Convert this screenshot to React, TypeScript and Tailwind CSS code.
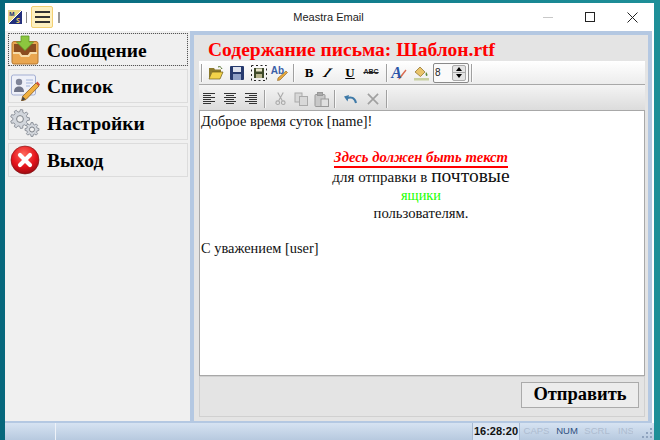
import type { ReactNode } from "react";

const serif = "font-['Liberation_Serif',serif]";
const sans = "font-['Liberation_Sans',sans-serif]";

function Sep({ className = "mx-[2px]" }: { className?: string }) {
  return <div className={`h-[18px] w-[2px] border-l border-[#a0a0a0] bg-white/70 shrink-0 ${className}`} />;
}

function Tool({ children, w }: { children: ReactNode; w: string }) {
  return <div className={`${w} h-[20px] flex items-center justify-center shrink-0`}>{children}</div>;
}

function MailIcon() {
  return (
    <svg width="30" height="30" viewBox="0 0 30 30">
      <path d="M2 8.500a2 2 0 0 1 2-2h22a2 2 0 0 1 2 2V27a2 2 0 0 1-2 2H4a2 2 0 0 1-2-2z" fill="#e9a650" stroke="#b5772e" />
      <path d="M4 9h22v8h-6l-2 3h-6l-2-3H4z" fill="#8a4d20" />
      <path d="M3 17h7l2 3h6l2-3h7v2h-6l-2 3h-8l-2-3H3z" fill="#f6dcaa" />
      <path d="M11 1h8v6h4.500L15 15.500 6.500 7H11z" fill="#8cc63f" stroke="#5f9a2c" strokeWidth=".8" />
    </svg>
  );
}

function ListIcon() {
  return (
    <svg width="30" height="30" viewBox="0 0 30 30">
      <g transform="translate(0 3)">
        <rect x="1.500" y="1" width="24" height="20" rx="2" fill="#eef0f8" stroke="#a3aed2" />
        <circle cx="9" cy="8" r="3.200" fill="#7f8498" />
        <path d="M4 18c0-4 2.200-5.500 5-5.500s5 1.500 5 5.500z" fill="#6f7488" />
        <path d="M16 6h7M16 9h7M16 12h4" stroke="#bcc7e4" strokeWidth="1.500" />
        <path d="M26 9l3 3-13 13.500-4.500 1.500 1.200-4.800z" fill="#f0b040" stroke="#8a5a20" strokeWidth=".8" />
        <path d="M26 9l3 3 1-1.500-2.500-3z" fill="#d8503c" />
        <path d="M11.500 27l1.200-4.500 3 2.800z" fill="#444" />
      </g>
    </svg>
  );
}

function gearPath(cx: number, cy: number, outer: number, inner: number, teeth: number) {
  const pts: string[] = [];
  for (let i = 0; i < teeth; i++) {
    const a = (i / teeth) * Math.PI * 2;
    const s = (Math.PI * 2) / teeth;
    [
      [inner, a - s * 0.32],
      [outer, a - s * 0.18],
      [outer, a + s * 0.18],
      [inner, a + s * 0.32],
    ].forEach(([r, t]) => pts.push(`${(cx + r * Math.cos(t)).toFixed(2)} ${(cy + r * Math.sin(t)).toFixed(2)}`));
  }
  return `M${pts.join("L")}Z`;
}

function Gear({ cx, cy, r, teeth }: { cx: number; cy: number; r: number; teeth: number }) {
  return (
    <g>
      <path d={gearPath(cx, cy, r, r * 0.76, teeth)} fill="#d2d6dc" stroke="#878c95" strokeWidth=".9" />
      <circle cx={cx} cy={cy} r={r * 0.36} fill="#f0f0f0" stroke="#7d8289" strokeWidth="1" />
    </g>
  );
}

function GearsIcon() {
  return (
    <svg width="30" height="30" viewBox="0 0 30 30">
      <Gear cx={10} cy={11} r={9.500} teeth={9} />
      <Gear cx={22} cy={21.500} r={7} teeth={8} />
    </svg>
  );
}

function ExitIcon() {
  return (
    <svg width="30" height="30" viewBox="0 0 30 30">
      <defs>
        <radialGradient id="exitRed" cx="45%" cy="30%" r="75%">
          <stop offset="0" stopColor="#ff6a5c" />
          <stop offset="0.6" stopColor="#e3121a" />
          <stop offset="1" stopColor="#8e0a10" />
        </radialGradient>
      </defs>
      <circle cx="15" cy="15" r="14" fill="url(#exitRed)" stroke="#7a1010" strokeWidth=".6" />
      <path d="M10 10l10 10M20 10L10 20" stroke="#fff" strokeWidth="4.200" strokeLinecap="round" />
    </svg>
  );
}

function NavButton({ icon, label, focused, h }: { icon: ReactNode; label: string; focused?: boolean; h: string }) {
  return (
    <div className={`${h} w-[180px] flex items-center bg-[#f0f0f0] border border-[#dcdcdc] shrink-0 ${focused ? "outline-1 outline-dotted outline-[#555] -outline-offset-1" : ""}`}>
      <div className="w-[38px] pl-[1px] flex justify-start shrink-0">{icon}</div>
      <span className={`${serif} mt-[2px] text-[19.500px] font-bold leading-none text-black`}>{label}</span>
    </div>
  );
}

function TopBar() {
  return (
    <div className="h-[28px] bg-white flex items-center shrink-0">
      <svg width="14" height="14" viewBox="0 0 14 14" className="ml-[3px]">
        <rect width="14" height="14" fill="#e9d98a" />
        <path d="M14 0v14H0z" fill="#23307c" />
        <path d="M0 14L14 0" stroke="#fff" strokeWidth="1" />
        <text x="1" y="6" fontSize="6" fill="#23307c" fontWeight="700">M</text>
        <text x="8" y="12.500" fontSize="7" fill="#f0d060" fontWeight="700">S</text>
      </svg>
      <div className="w-px h-[11px] bg-[#888] ml-[4px]" />
      <div className="ml-[4px] w-[22px] h-[22px] rounded-[2px] border border-[#f2cf72] bg-[#fdf0c0] flex flex-col items-center justify-center gap-[3px]">
        <div className="w-[15px] h-[2px] bg-[#333]" />
        <div className="w-[15px] h-[2px] bg-[#333]" />
        <div className="w-[15px] h-[2px] bg-[#333]" />
      </div>
      <div className="w-[2px] h-[11px] bg-[#999] ml-[5px]" />
      <div className={`flex-1 text-center text-[11px] text-[#222] ${sans} pl-[70px]`}>Meastra Email</div>
      <div className="w-[42px] flex justify-center">
        <div className="w-[10px] h-px bg-[#c8c8c8]" />
      </div>
      <div className="w-[42px] flex justify-center">
        <div className="w-[10px] h-[10px] border border-[#222]" />
      </div>
      <div className="w-[42px] mr-px flex justify-center">
        <svg width="11" height="11" viewBox="0 0 11 11">
          <path d="M.5.500l10 10M10.500.500l-10 10" stroke="#222" strokeWidth="1" />
        </svg>
      </div>
    </div>
  );
}

function ToolbarOne() {
  return (
    <div className="h-[23px] ml-[5px] mr-[3px] bg-gradient-to-b from-white to-[#ececec] flex items-center">
      <Sep />
      <Tool w="w-[21px]">
        <svg width="16" height="14" viewBox="0 0 16 14">
          <path d="M1 2h5l1 1.500h6V6H4L1 13z" fill="#8c7a2c" />
          <path d="M1 13l3-7h11l-3 7z" fill="#f2d24a" stroke="#6f5c14" strokeWidth=".7" />
          <path d="M10 1c2-1 3 0 4 2" stroke="#4a6a20" fill="none" />
        </svg>
      </Tool>
      <Tool w="w-[22px]">
        <svg width="14" height="14" viewBox="0 0 14 14">
          <rect width="14" height="14" rx="1" fill="#263a6e" />
          <rect x="3" y="1" width="8" height="5" fill="#dfe4ef" />
          <rect x="3" y="8" width="8" height="6" fill="#8ea0c6" />
        </svg>
      </Tool>
      <Tool w="w-[21px]">
        <svg width="16" height="16" viewBox="0 0 16 16">
          <rect x="3" y="3" width="10" height="10" fill="#3e4a2a" />
          <rect x="5" y="3.500" width="6" height="3" fill="#e8e4c8" />
          <rect x="5" y="9" width="6" height="4" fill="#b6b48c" />
          <rect x=".5" y=".5" width="15" height="15" fill="none" stroke="#222" strokeDasharray="2 2.500" />
        </svg>
      </Tool>
      <Tool w="w-[22px]">
        <span className={`${sans} text-[10px] font-bold text-[#3a5fa8] -translate-x-[1px] -translate-y-[2px]`}>Ab</span>
        <svg width="11" height="11" viewBox="0 0 11 11" className="-ml-[8px] mt-[5px]">
          <path d="M9 1l1.500 1.500L3 10l-2.500 .5L1 8z" fill="#e8a83c" stroke="#8a6020" strokeWidth=".6" />
        </svg>
      </Tool>
      <Sep />
      <Tool w="w-[20px] ml-[2px]"><span className={`${serif} text-[13px] font-bold`}>B</span></Tool>
      <Tool w="w-[18px]"><span className={`${serif} inline-block -skew-x-[30deg] text-[13px] font-bold italic`}>I</span></Tool>
      <Tool w="w-[26px]"><span className={`${serif} text-[13px] font-bold underline`}>U</span></Tool>
      <Tool w="w-[16px]"><span className={`${sans} text-[7px] font-bold line-through text-[#222]`}>ABC</span></Tool>
      <Sep className="ml-[7px] mr-[2px]" />
      <Tool w="w-[20px]">
        <span className={`${serif} text-[16px] font-bold italic text-[#2a55a8] -translate-x-[2px]`}>A</span>
        <svg width="9" height="11" viewBox="0 0 9 11" className="-ml-[6px] mt-[4px]">
          <path d="M7.500 .5l1 1L2 10l-1.500 .5L1 8.500z" fill="#d86a50" />
        </svg>
      </Tool>
      <Tool w="w-[22px]">
        <svg width="15" height="16" viewBox="0 0 15 16">
          <path d="M1 7l5-5 5 5-4.500 4.500z" fill="#e9c46a" stroke="#8a6a24" strokeWidth=".7" />
          <path d="M12 7c1.500 2 2 3 1 4-1 .5-2-1-1-4z" fill="#5d8a3a" />
          <rect x="0" y="13" width="15" height="2.500" fill="#c8d0a0" />
        </svg>
      </Tool>
      <div className="ml-[1px] w-[36px] h-[20px] border border-[#8a8a8a] rounded-[2px] bg-[#fafafa] flex items-center shrink-0">
        <span className={`text-[10px] pl-[1px] flex-1 ${sans} text-[#222]`}>8</span>
        <div className="w-[14px] h-[16px] mr-[2px] flex flex-col bg-[#e4e4e4] border border-[#aaa] rounded-[2px]">
          <div className="flex-1 flex items-center justify-center border-b border-[#aaa]">
            <div className="w-0 h-0 border-x-[3px] border-x-transparent border-b-[4px] border-b-black" />
          </div>
          <div className="flex-1 flex items-center justify-center">
            <div className="w-0 h-0 border-x-[3px] border-x-transparent border-t-[4px] border-t-black" />
          </div>
        </div>
      </div>
      <Sep />
    </div>
  );
}

function AlignIcon({ kind }: { kind: "left" | "center" | "right" }) {
  const rows = [12, 8, 12, 8, 12, 8];
  const x = (w: number) => (kind === "left" ? 0 : kind === "center" ? (12 - w) / 2 : 12 - w);
  return (
    <svg width="12" height="12" viewBox="0 0 12 12">
      {rows.map((w, i) => (
        <rect key={i} x={x(w)} y={i * 2} width={w} height="1" fill="#333" />
      ))}
    </svg>
  );
}

function ToolbarTwo() {
  return (
    <div className="h-[25px] pt-[3px] ml-[5px] mr-[3px] bg-gradient-to-b from-[#f4f4f4] to-[#dcdcdc] flex items-center">
      <Tool w="w-[20px]"><AlignIcon kind="left" /></Tool>
      <Tool w="w-[21px]"><AlignIcon kind="center" /></Tool>
      <Tool w="w-[22px]"><AlignIcon kind="right" /></Tool>
      <Sep />
      <Tool w="w-[24px]">
        <svg width="11" height="14" viewBox="0 0 12 14" fill="none" stroke="#aaa" strokeWidth="1.200">
          <path d="M3 0l5 9M9 0L4 9" />
          <circle cx="3" cy="11" r="2" />
          <circle cx="9" cy="11" r="2" />
        </svg>
      </Tool>
      <Tool w="w-[18px]">
        <svg width="14" height="14" viewBox="0 0 14 14" fill="#d8d8d8" stroke="#aaa">
          <rect x="1" y="1" width="7" height="9" />
          <rect x="5.500" y="4.500" width="8" height="9" />
        </svg>
      </Tool>
      <Tool w="w-[22px]">
        <svg width="15" height="15" viewBox="0 0 15 15" fill="#c8c8c8" stroke="#999">
          <rect x="1" y="2.500" width="10" height="12" rx="1" />
          <rect x="3.500" y=".5" width="5" height="3" fill="#aaa" />
          <rect x="7" y="7" width="7.500" height="7.500" fill="#e0e0e0" />
        </svg>
      </Tool>
      <Sep />
      <Tool w="w-[24px]">
        <svg width="13" height="10" viewBox="0 0 13 10" fill="none">
          <path d="M12 9C11 4 7 2 2.500 4.500" stroke="#3f7aa8" strokeWidth="2" />
          <path d="M0 2.500L5 1 3.500 7.500z" fill="#3f7aa8" />
        </svg>
      </Tool>
      <Tool w="w-[22px]">
        <svg width="12" height="12" viewBox="0 0 13 13">
          <path d="M1 1l11 11M12 1L1 12" stroke="#a0a0a0" strokeWidth="1.800" />
        </svg>
      </Tool>
      <Sep />
    </div>
  );
}

function Editor() {
  return (
    <div className={`${serif} ml-[5px] mr-[3px] h-[266px] bg-white border border-[#a8a8a8] pl-[1px] pt-[1px] text-[14.400px] leading-[19px] text-[#111] shrink-0`}>
      <p className="h-[19px]">Доброе время суток [name]!</p>
      <div className="h-[18px]" />
      <div className="flex flex-col items-center pr-[3px]">
        <p className="h-[19px] -mb-[2px] font-bold italic text-[14.700px] text-[#ff0000] border-b-2 border-[#ff0000] leading-[17px]">Здесь должен быть текст</p>
        <p className="h-[20px] leading-[20px] text-[15px]">для отправки в <span className="text-[19.500px]">почтовые</span></p>
        <p className="h-[18px] leading-[18px] text-[#22ff00]">ящики</p>
        <p className="h-[19px] leading-[19px] text-[14.700px]">пользователям.</p>
      </div>
      <div className="h-[16px]" />
      <p>С уважением [user]</p>
    </div>
  );
}

function ContentPanel() {
  return (
    <div className="flex-1 border-x-[4px] border-t-[4px] border-b-2 border-[#b4c8e2] bg-[#e4e4e4] flex flex-col">
      <div className={`${serif} h-[26px] pl-[14px] pt-[3px] text-[19.500px] font-bold text-[#ff0000] leading-[24px]`}>
        Содержание письма: Шаблон.rtf
      </div>
      <ToolbarOne />
      <div className="h-px ml-[5px] mr-[3px] bg-[#a8a8a8] shrink-0" />
      <ToolbarTwo />
      <Editor />
      <div className="flex-1 ml-[5px] mr-[3px] mb-[4px] bg-[#e4e4e4] border border-[#d0d0d0] flex justify-end items-start pt-[5px] pr-[5px]">
        <div className={`${serif} w-[118px] h-[26px] border border-[#aaa] bg-[#ececec] flex items-center justify-center text-[18.500px] font-bold text-black`}>
          Отправить
        </div>
      </div>
    </div>
  );
}

function StatusBar() {
  const dots = [[8, 0], [4, 4], [8, 4], [0, 8], [4, 8], [8, 8]];
  return (
    <div className={`h-[17px] ${sans} text-[9.500px] bg-gradient-to-b from-[#d6e3f2] to-[#b7c9df] flex items-center shrink-0`}>
      <div className="w-[51px] h-full border-r border-[#eef2f8]" />
      <div className="flex-1" />
      <div className="w-[48px] h-full bg-[#dbe5f2] flex items-center justify-center border-x border-[#a8bad2]">
        <span className="text-[11px] font-bold text-[#111]">16:28:20</span>
      </div>
      <div className="w-[33px] text-center text-[#aebcd0]">CAPS</div>
      <div className="w-[28px] text-center text-[#2f4f80]">NUM</div>
      <div className="w-[32px] text-center text-[#aebcd0]">SCRL</div>
      <div className="w-[20px] overflow-hidden pl-[5px] text-[#aebcd0] whitespace-nowrap">INS</div>
      <div className="w-[21px] h-full flex justify-end items-end pr-[1px] pb-[1px]">
        <svg width="11" height="11" viewBox="0 0 11 11">
          {dots.map(([x, y]) => (
            <rect key={`${x}-${y}`} x={x} y={y} width="2" height="2" fill="#8fa3bf" />
          ))}
        </svg>
      </div>
    </div>
  );
}

export default function App() {
  return (
    <div className="w-[660px] h-[440px] overflow-hidden bg-gradient-to-r from-[#06677c] via-[#117c8c] to-[#1e8f98] pl-[5px] pr-[6px] pt-[3px]">
      <div className="h-[437px] flex flex-col bg-white">
        <TopBar />
        <div className="flex-1 flex min-h-0 pr-[2px]">
          <div className="w-[185px] bg-[#f0f0f0] pl-[3px] pt-[2px] border-b-2 border-[#b4c8e2] flex flex-col gap-[3px] shrink-0">
            <NavButton h="h-[33px]" focused icon={<MailIcon />} label="Сообщение" />
            <NavButton h="h-[34px]" icon={<ListIcon />} label="Список" />
            <NavButton h="h-[34px]" icon={<GearsIcon />} label="Настройки" />
            <NavButton h="h-[34px]" icon={<ExitIcon />} label="Выход" />
          </div>
          <ContentPanel />
        </div>
        <StatusBar />
      </div>
    </div>
  );
}
